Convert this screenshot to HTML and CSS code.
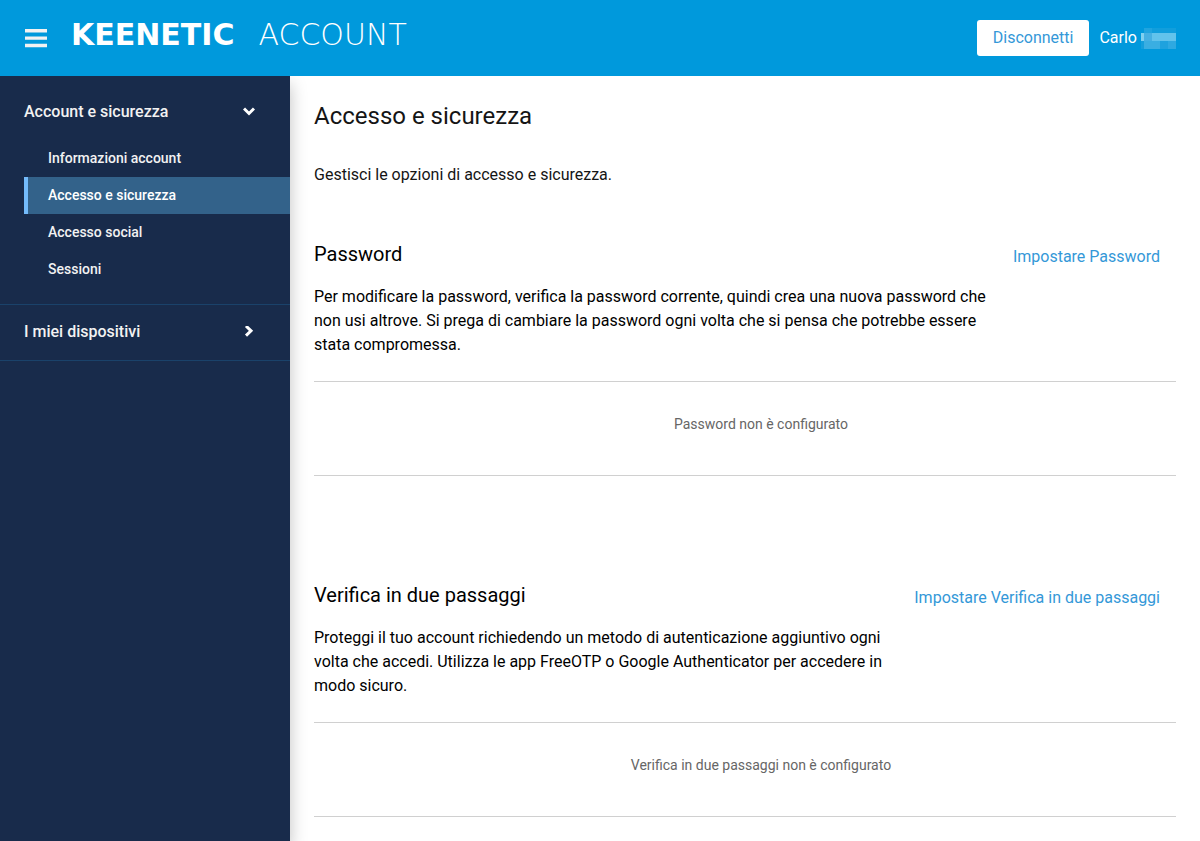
FILE: index.html
```html
<!DOCTYPE html>
<html lang="it">
<head>
<meta charset="utf-8">
<meta name="viewport" content="width=device-width, initial-scale=1">
<title>Keenetic Account</title>
<link rel="stylesheet" href="styles.css">
</head>
<body>
<header class="topbar">
  <button class="menu-button" type="button" aria-label="Menu">
    <svg width="22" height="20" viewBox="0 0 22 20" aria-hidden="true"><path d="M0 1h22v3.400H0zM0 8.400h22v3.400H0zM0 15.800h22v3.400H0z" fill="#f2f2f2"/></svg>
  </button>
  <a class="brand" href="#"><span class="brand-name">KEENETIC</span><span class="brand-product">ACCOUNT</span></a>
  <button class="logout" type="button">Disconnetti</button>
  <div class="user">Carlo
    <svg width="35" height="21" viewBox="0 0 35 21" shape-rendering="crispEdges" aria-hidden="true">
      <path fill="#1fa4df" d="M3 0h8v5H3z"/><path fill="#119edc" d="M11 0h8v5h-8zM19 0h16v5H19z"/>
      <path fill="#7fd0f0" d="M0 5h3v8H0z"/><path fill="#45b0e3" d="M3 5h8v8H3z"/><path fill="#62c3ec" d="M11 5h24v8H11z"/>
      <path fill="#149edc" d="M0 13h3v8H0z"/><path fill="#3aaee2" d="M3 13h16v8H3z"/><path fill="#1fa2de" d="M19 13h8v8h-8z"/><path fill="#2fa9e1" d="M27 13h8v8h-8z"/>
    </svg>
  </div>
</header>
<div class="layout">
  <nav class="sidebar" aria-label="Menu principale">
    <section class="group">
      <button class="group-title" type="button" aria-expanded="true">Account e sicurezza
        <svg class="chevron" width="12" height="12" viewBox="0 0 12 12" aria-hidden="true"><path d="M1 2.500 6 7.500l5-5"/></svg>
      </button>
      <ul class="links">
        <li><a class="link" href="#">Informazioni account</a></li>
        <li><a class="link active" href="#" aria-current="page">Accesso e sicurezza</a></li>
        <li><a class="link" href="#">Accesso social</a></li>
        <li><a class="link" href="#">Sessioni</a></li>
      </ul>
    </section>
    <section class="group">
      <button class="group-title" type="button" aria-expanded="false">I miei dispositivi
        <svg class="chevron" width="12" height="12" viewBox="0 0 12 12" aria-hidden="true"><path d="M3 0 8 4.800 3 9.600"/></svg>
      </button>
    </section>
  </nav>
  <main class="content">
    <h1 class="title">Accesso e sicurezza</h1>
    <p class="intro">Gestisci le opzioni di accesso e sicurezza.</p>
    <section class="panel">
      <div class="panel-head">
        <div class="panel-text">
          <h2 class="panel-title">Password</h2>
          <p class="panel-description">Per modificare la password, verifica la password corrente, quindi crea una nuova password che non usi altrove. Si prega di cambiare la password ogni volta che si pensa che potrebbe essere stata compromessa.</p>
        </div>
        <a class="panel-action" href="#">Impostare Password</a>
      </div>
      <p class="status">Password non è configurato</p>
    </section>
    <section class="panel">
      <div class="panel-head">
        <div class="panel-text">
          <h2 class="panel-title">Verifica in due passaggi</h2>
          <p class="panel-description">Proteggi il tuo account richiedendo un metodo di autenticazione aggiuntivo ogni volta che accedi. Utilizza le app FreeOTP o Google Authenticator per accedere in modo sicuro.</p>
        </div>
        <a class="panel-action" href="#">Impostare Verifica in due passaggi</a>
      </div>
      <p class="status">Verifica in due passaggi non è configurato</p>
    </section>
  </main>
</div>
</body>
</html>
```
FILE: styles.css
```css
* {
  box-sizing: border-box;
}

body {
  margin: 0;
  min-height: 100vh;
  display: flex;
  flex-direction: column;
  font: 16px/24px Roboto, sans-serif;
  color: #151515;
  background: #fff;
}

button {
  font: inherit;
  cursor: pointer;
}

a {
  text-decoration: none;
}

h1, h2, p, ul {
  margin: 0;
  padding: 0;
  font-weight: 400;
}

.topbar {
  display: flex;
  align-items: center;
  min-height: 76px;
  padding: 0 24px 0 25px;
  color: #fff;
  background: #0099dc;
}

.menu-button {
  display: flex;
  padding: 0;
  border: 0;
  background: none;
}

.brand {
  display: flex;
  gap: 24px;
  margin-right: auto;
  padding: 0 0 6px 24px;
  color: #fff;
  font: 30px/32px "DejaVu Sans", sans-serif;
}

.brand-name {
  font-weight: 700;
}

.brand-product {
  font-weight: 200;
}

.logout {
  height: 36px;
  padding: 0 16px;
  border: 0;
  border-radius: 3px;
  color: #3498d8;
  background: #fff;
}

.user {
  display: flex;
  align-items: center;
  gap: 4px;
  padding-left: 10px;
}

.layout {
  flex: 1;
  display: flex;
}

.sidebar {
  flex: 0 0 290px;
  color: #f2f2f2;
  background: #182b4b;
  box-shadow: 0 8px 16px rgba(0, 0, 0, .25);
  clip-path: inset(0 -24px 0 0);
}

.group {
  border-bottom: 1px solid #1a426a;
}

.group-title {
  display: flex;
  align-items: center;
  justify-content: space-between;
  width: 100%;
  height: 55px;
  padding: 0 35px 2px 24px;
  border: 0;
  color: inherit;
  background: none;
  font-weight: 500;
}

.chevron {
  fill: none;
  stroke: #fff;
  stroke-width: 3;
}

.links {
  padding: 0 0 16px 24px;
  list-style: none;
}

.group:first-child .group-title {
  height: 64px;
  padding-top: 9px;
}

.link {
  display: block;
  padding: 8px 20px;
  border-left: 4px solid transparent;
  color: #f2f2f2;
  font-size: 14px;
  line-height: 21px;
  font-weight: 500;
}

.link.active {
  border-color: #74bbfb;
  background: #33628a;
  color: #fff;
}

.content {
  flex: 1;
  min-width: 0;
  padding: 24px 24px 0;
}

.title {
  font-size: 24px;
  line-height: 32px;
}

.intro {
  padding-top: 31px;
}

.panel {
  padding-top: 55px;
  color: #000;
}

.panel + .panel {
  padding-top: 107px;
}

.panel-head {
  display: flex;
  align-items: flex-start;
  padding-bottom: 24px;
  border-bottom: 1px solid #d0d0d0;
}

.panel-text {
  flex: 1;
  min-width: 0;
}

.panel-title {
  font-size: 20px;
  line-height: 24px;
}

.panel-description {
  padding-top: 19px;
}

.panel-action {
  padding: 3px 16px 0;
  color: #3498d8;
}

.status {
  padding: 30px 0 39px 32px;
  border-bottom: 1px solid #d0d0d0;
  color: #666;
  font-size: 14px;
  text-align: center;
}
```
